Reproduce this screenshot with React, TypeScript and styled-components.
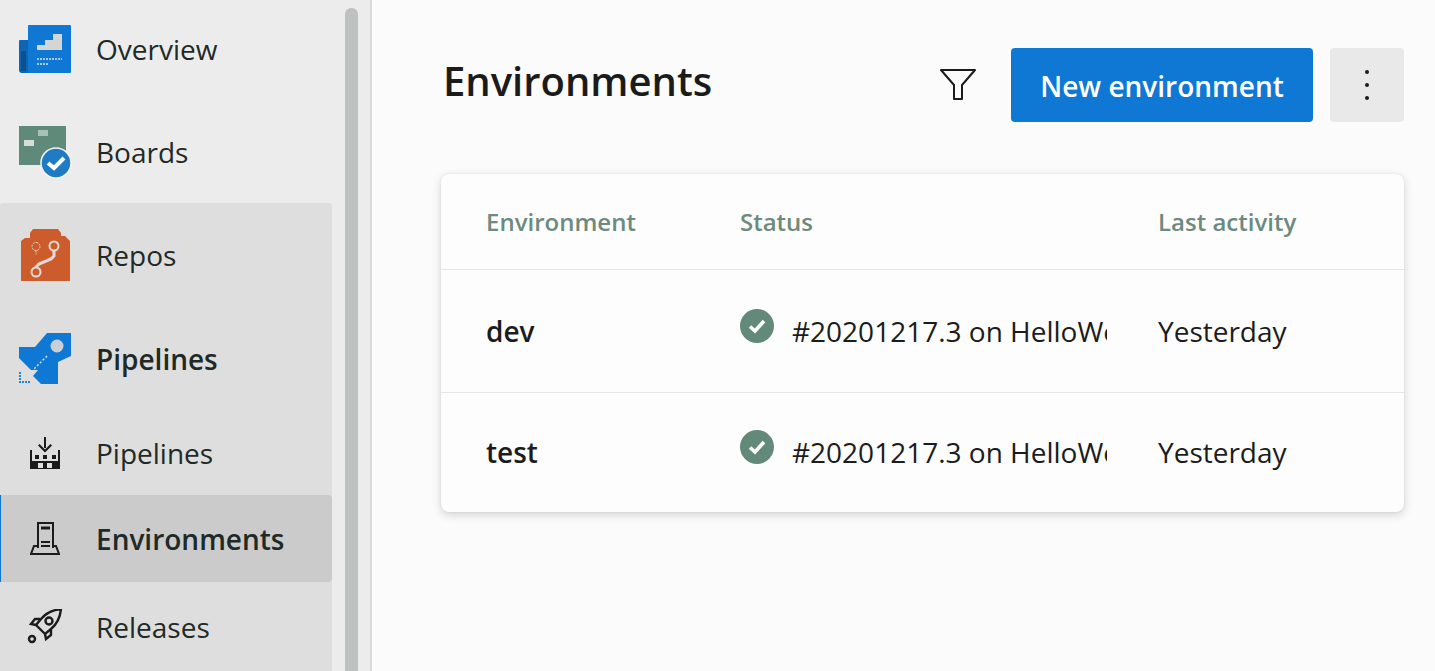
import React from 'react';
import styled, { createGlobalStyle } from 'styled-components';

const GlobalStyle = createGlobalStyle`
    html, body {
        margin: 0;
        height: 100%;
        overflow: hidden;
        background: #fbfbfb;
    }
    #root {
        height: 100%;
    }
`;

const Page = styled.div`
    display: flex;
    height: 671px;
    overflow: hidden;
    font-family: "Open Sans", "Noto Sans", sans-serif;
    color: #1c1f1e;
`;

const Sidebar = styled.aside`
    display: flex;
    flex: 0 0 372px;
    box-sizing: border-box;
    height: 671px;
    background: #ececec;
    border-right: 2px solid #d9d9d9;
`;

const Nav = styled.nav`
    display: flex;
    flex-direction: column;
    width: 332px;
    margin-top: -3px;
`;

const Group = styled.div`
    display: flex;
    flex-direction: column;
    flex: 1;
    background: #dedede;
    border-radius: 3px 3px 0 0;
`;

const NavRow = styled.div<{ $height: number; $selected?: boolean }>`
    display: flex;
    align-items: center;
    box-sizing: border-box;
    height: ${p => p.$height}px;
    flex: 0 0 ${p => p.$height}px;
    background: ${p => (p.$selected ? '#cbcbcb' : 'transparent')};
    border-left: 1px solid ${p => (p.$selected ? '#0f78d4' : 'transparent')};
    border-radius: ${p => (p.$selected ? '0 4px 4px 0' : '0')};
`;

const IconSlot = styled.span`
    display: flex;
    justify-content: center;
    align-items: center;
    flex: 0 0 90px;
    margin-left: -1px;
    margin-right: 6px;
`;

const NavLabel = styled.span<{ $bold?: boolean }>`
    font-size: 28px;
    font-weight: ${p => (p.$bold ? 600 : 400)};
    color: #1f2a27;
    white-space: nowrap;
`;

const Track = styled.div`
    width: 13px;
    margin: 8px 0 0 13px;
    background: #bfc1c1;
    border-radius: 6px 6px 0 0;
`;

const Main = styled.main`
    flex: 1;
    min-width: 0;
    padding: 48px 31px 0 69px;
`;

const Header = styled.header`
    display: flex;
    align-items: flex-start;
    height: 74px;
`;

const Title = styled.h1`
    flex: 1;
    margin: 7px 0 0 2px;
    font-size: 40px;
    line-height: 52px;
    font-weight: 600;
    color: #1b1b1b;
`;

const FilterButton = styled.span`
    display: flex;
    justify-content: center;
    margin: 21px 35px 0 0;
    width: 36px;
`;

const PrimaryButton = styled.button`
    width: 302px;
    height: 74px;
    padding: 2px 0 0;
    border: 0;
    border-radius: 4px;
    background: #0f78d4;
    color: #fff;
    font-family: inherit;
    font-size: 28px;
    font-weight: 600;
`;

const MoreButton = styled.button`
    display: flex;
    flex-direction: column;
    justify-content: center;
    align-items: center;
    gap: 9px;
    width: 74px;
    height: 74px;
    margin-left: 17px;
    padding: 0;
    border: 0;
    border-radius: 4px;
    background: #e9e9e9;
`;

const Dot = styled.i`
    width: 4px;
    height: 4px;
    border-radius: 50%;
    background: #1c1c1c;
`;

const Card = styled.section`
    margin-top: 52px;
    padding-bottom: 2px;
    background: #fdfdfd;
    border-radius: 8px;
    box-shadow: 0 3px 10px rgba(0, 0, 0, 0.16), 0 0 2px rgba(0, 0, 0, 0.1);
`;

const Row = styled.div<{ $height: number; $divider?: boolean }>`
    display: grid;
    grid-template-columns: 254px 418px 1fr;
    align-items: center;
    box-sizing: border-box;
    height: ${p => p.$height}px;
    padding-left: 45px;
    border-bottom: ${p => (p.$divider ? '1px solid #e6e6e6' : '0')};
`;

const HeadCell = styled.span`
    font-size: 24px;
    font-weight: 600;
    color: #6d8a7e;
`;

const NameCell = styled.span`
    font-size: 28px;
    font-weight: 600;
    color: #1c1c1c;
`;

const StatusCell = styled.span`
    display: flex;
    align-items: center;
    gap: 18px;
`;

const StatusIcon = styled.svg`
    flex: 0 0 34px;
    margin-top: -10px;
`;

const BuildText = styled.span`
    width: 315px;
    overflow: hidden;
    white-space: nowrap;
    font-size: 28px;
    color: #1c1c1c;
`;

const TimeCell = styled.span`
    font-size: 28px;
    color: #1c1c1c;
`;

const OverviewIcon = () => (
    <svg width="52" height="48" viewBox="0 0 52 48">
        <path d="M9 1a1 1 0 0 1 1-1h41a1 1 0 0 1 1 1v46a1 1 0 0 1-1 1H9z" fill="#0f78d4" />
        <path d="M1 15h8v33H3a3 3 0 0 1-3-3V16a1 1 0 0 1 1-1z" fill="#0d66b5" />
        <path d="M2 26h5v20H2z" fill="#0a3f70" opacity="0.55" />
        <path d="M18 25v-5h8v-5h8V9h9v16z" fill="#d4d6d6" />
        <path d="M18 34h25M18 39h11" stroke="#d6e6f4" strokeWidth="1.5" strokeDasharray="2 1" />
    </svg>
);

const BoardsIcon = () => (
    <svg width="52" height="52" viewBox="0 0 52 52">
        <rect x="0" y="0" width="47" height="39" fill="#5f8a7a" />
        <rect x="5" y="14" width="10" height="6" fill="#d8dcda" />
        <rect x="19" y="4" width="10" height="6" fill="#a8c0b8" />
        <circle cx="37" cy="37" r="15" fill="#1f7cc4" stroke="#f4f4f4" strokeWidth="1.5" />
        <path d="M29 37l6 5 10-10" fill="none" stroke="#fff" strokeWidth="4" />
    </svg>
);

const ReposIcon = () => (
    <svg width="49" height="53" viewBox="0 0 49 53">
        <path d="M0 53V13l4-3h5V5l3-4h25l3 4v3h4l5 5v40z" fill="#cd5c2c" />
        <g fill="none" stroke="#e6dcd6" strokeWidth="2">
            <circle cx="33" cy="18" r="4.5" />
            <circle cx="15" cy="44" r="4.5" />
        </g>
        <path d="M15 14.5a4 4 0 0 1 0 8 4 4 0 0 1 0-8zM15 22.500v4" fill="none" stroke="#e6dcd6" strokeWidth="1" strokeDasharray="2 1" />
        <path d="M33 23v5l-3 3-12 5-3 3v1" fill="none" stroke="#e6dcd6" strokeWidth="3" />
    </svg>
);

const PipelinesLogo = () => (
    <svg width="52" height="52" viewBox="0 0 52 52">
        <path d="M28 0H52V23L39 29V51H22L14 43L19 37L12 37L0 25V14H16z" fill="#0f78d4" />
        <circle cx="38" cy="13" r="6.5" fill="#c9cfd4" />
        <path d="M28 23L15 36" stroke="#d5e6f6" strokeWidth="1.5" strokeDasharray="2 2" />
        <path d="M1 39v10h11" fill="none" stroke="#1f86df" strokeWidth="2" strokeDasharray="2 1" />
    </svg>
);

const PipelineSmallIcon = () => (
    <svg width="30" height="33" viewBox="0 0 30 33" fill="#1b1b1b">
        <path d="M14 0h2v11h-2z" />
        <path d="M9.500 7l5.500 5.500L20.500 7l1.500 1.500-7 7-7-7z" />
        <path d="M0 13h2v11h26V13h2v19H0z" />
        <rect x="5" y="18" width="4" height="4" />
        <rect x="13" y="18" width="4" height="4" />
        <rect x="22" y="18" width="4" height="4" />
        <rect x="8" y="26" width="5" height="5" fill="#dedede" />
        <rect x="17" y="26" width="5" height="5" fill="#dedede" />
    </svg>
);

const EnvironmentIcon = () => (
    <svg width="30" height="33" viewBox="0 0 30 33" fill="none" stroke="#1b1b1b" strokeWidth="2">
        <path d="M8 26V1h15v25" />
        <path d="M11 6h9" strokeWidth="3" />
        <path d="M11 20h9M11 24h9" />
        <path d="M8 24H4L1 32h28l-3-8h-3" />
    </svg>
);

const RocketIcon = () => (
    <svg width="36" height="36" viewBox="0 0 36 36" fill="none" stroke="#1b1b1b" strokeWidth="2.4">
        <path d="M34 0c-9 1-15 4-20 10l-5 6 9 9 6-5c6-5 9-11 10-20z" />
        <circle cx="22" cy="12" r="3.500" />
        <path d="M13 10H8l-4 5 5 1M24 21v5l-5 4-1-5" />
        <circle cx="5" cy="30" r="3" />
    </svg>
);

const FilterIcon = () => (
    <svg width="36" height="31" viewBox="0 0 36 31" fill="none" stroke="#1b1b1b" strokeWidth="2">
        <path d="M1 1h34L22 16v14h-8V16z" strokeLinejoin="round" />
    </svg>
);

const CheckCircle = () => (
    <StatusIcon width="34" height="34" viewBox="0 0 34 34">
        <circle cx="17" cy="17" r="17" fill="#63897a" />
        <path d="M10 17.500l5 4.500 9-10" fill="none" stroke="#fff" strokeWidth="3.600" />
    </StatusIcon>
);

const rows = [
    { name: 'dev', height: 123, divider: true },
    { name: 'test', height: 117, divider: false },
];

const App: React.FC = () => {
    return (
        <Page>
            <GlobalStyle />
            <Sidebar>
                <Nav>
                    <NavRow $height={104}>
                        <IconSlot><OverviewIcon /></IconSlot>
                        <NavLabel>Overview</NavLabel>
                    </NavRow>
                    <NavRow $height={102}>
                        <IconSlot><BoardsIcon /></IconSlot>
                        <NavLabel>Boards</NavLabel>
                    </NavRow>
                    <Group>
                        <NavRow $height={103}>
                            <IconSlot><ReposIcon /></IconSlot>
                            <NavLabel>Repos</NavLabel>
                        </NavRow>
                        <NavRow $height={105}>
                            <IconSlot><PipelinesLogo /></IconSlot>
                            <NavLabel $bold>Pipelines</NavLabel>
                        </NavRow>
                        <NavRow $height={84}>
                            <IconSlot><PipelineSmallIcon /></IconSlot>
                            <NavLabel>Pipelines</NavLabel>
                        </NavRow>
                        <NavRow $height={87} $selected>
                            <IconSlot><EnvironmentIcon /></IconSlot>
                            <NavLabel $bold>Environments</NavLabel>
                        </NavRow>
                        <NavRow $height={89}>
                            <IconSlot><RocketIcon /></IconSlot>
                            <NavLabel>Releases</NavLabel>
                        </NavRow>
                    </Group>
                </Nav>
                <Track />
            </Sidebar>
            <Main>
                <Header>
                    <Title>Environments</Title>
                    <FilterButton><FilterIcon /></FilterButton>
                    <PrimaryButton type="button">New environment</PrimaryButton>
                    <MoreButton type="button" aria-label="More">
                        <Dot />
                        <Dot />
                        <Dot />
                    </MoreButton>
                </Header>
                <Card>
                    <Row $height={96} $divider>
                        <HeadCell>Environment</HeadCell>
                        <HeadCell>Status</HeadCell>
                        <HeadCell>Last activity</HeadCell>
                    </Row>
                    {rows.map(row => (
                        <Row key={row.name} $height={row.height} $divider={row.divider}>
                            <NameCell>{row.name}</NameCell>
                            <StatusCell>
                                <CheckCircle />
                                <BuildText>#20201217.3 on HelloWorld</BuildText>
                            </StatusCell>
                            <TimeCell>Yesterday</TimeCell>
                        </Row>
                    ))}
                </Card>
            </Main>
        </Page>
    );
};

export default App;
